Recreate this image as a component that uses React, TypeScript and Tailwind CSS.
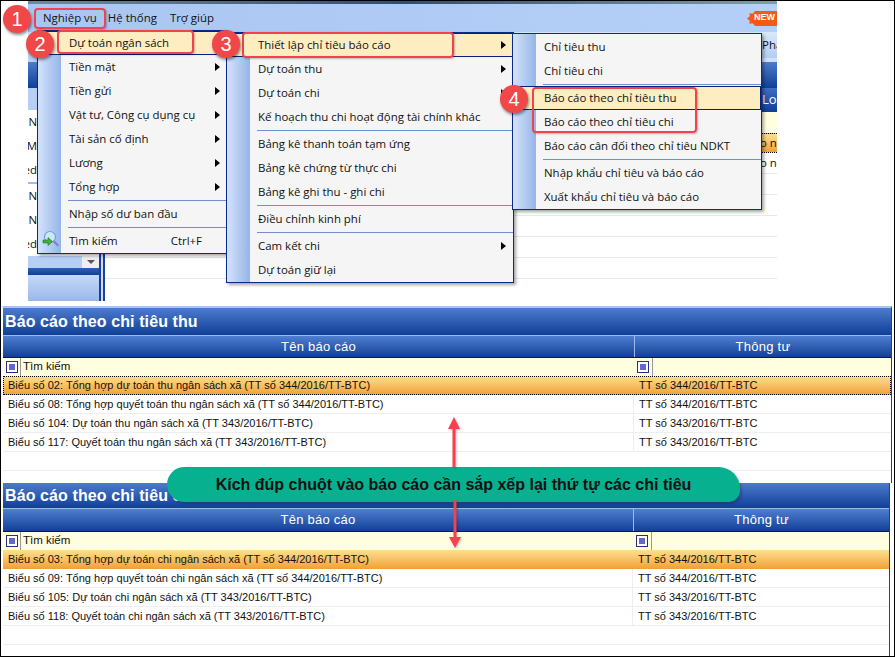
const menuFont = "font-['Open_Sans','Noto_Sans',sans-serif] text-[11.45px] text-[#111]"
const tableFont = "font-['Liberation_Sans',Arial,sans-serif] text-[11px] text-[#111]"

type Item = { label?: string; arrow?: boolean; sep?: boolean; active?: boolean; hint?: string; icon?: boolean }

const menu1: Item[] = [
  { label: 'Dự toán ngân sách', active: true },
  { label: 'Tiền mặt', arrow: true },
  { label: 'Tiền gửi', arrow: true },
  { label: 'Vật tư, Công cụ dụng cụ', arrow: true },
  { label: 'Tài sản cố định', arrow: true },
  { label: 'Lương', arrow: true },
  { label: 'Tổng hợp', arrow: true },
  { sep: true },
  { label: 'Nhập số dư ban đầu' },
  { sep: true },
  { label: 'Tìm kiếm', hint: 'Ctrl+F', icon: true },
]

const menu2: Item[] = [
  { label: 'Thiết lập chỉ tiêu báo cáo', arrow: true, active: true },
  { label: 'Dự toán thu', arrow: true },
  { label: 'Dự toán chi', arrow: true },
  { label: 'Kế hoạch thu chi hoạt động tài chính khác' },
  { sep: true },
  { label: 'Bảng kê thanh toán tạm ứng' },
  { label: 'Bảng kê chứng từ thực chi' },
  { label: 'Bảng kê ghi thu - ghi chi' },
  { sep: true },
  { label: 'Điều chỉnh kinh phí' },
  { sep: true },
  { label: 'Cam kết chi', arrow: true },
  { label: 'Dự toán giữ lại' },
]

const menu3: Item[] = [
  { label: 'Chỉ tiêu thu' },
  { label: 'Chỉ tiêu chi' },
  { sep: true },
  { label: 'Báo cáo theo chỉ tiêu thu', active: true },
  { label: 'Báo cáo theo chỉ tiêu chi' },
  { label: 'Báo cáo cân đối theo chỉ tiêu NDKT' },
  { sep: true },
  { label: 'Nhập khẩu chỉ tiêu và báo cáo' },
  { label: 'Xuất khẩu chỉ tiêu và báo cáo' },
]

function SearchIcon() {
  return (
    <svg className="absolute left-[4px] top-[1px] w-[17px] h-[17px]" viewBox="0 0 17 17">
      <circle cx="8" cy="7" r="5.5" fill="#cfe6fa" stroke="#6aa5d8" strokeWidth="1.2" />
      <path d="M12 11.5 L15.5 15" stroke="#8a7cc8" strokeWidth="2.2" strokeLinecap="round" />
      <path d="M1 10 H6 V7.5 L10.5 11.5 L6 15.5 V13 H1 Z" fill="#3fae3a" stroke="#1f7a1f" strokeWidth="0.6" />
    </svg>
  )
}

function MenuRows({ items }: { items: Item[] }) {
  return (
    <div className="flex flex-col">
      {items.map((item, i) =>
        item.sep ? (
          <div key={i} className="h-[3px] flex items-center pl-[30px]">
            <div className="h-px w-full bg-[#6f8fd0]" />
          </div>
        ) : (
          <div
            key={i}
            className={`h-6 flex items-center pl-[31px] pr-[7px] relative ${menuFont} ${
              item.active ? 'bg-[#fdedc0] outline outline-1 -outline-offset-1 outline-[#0a1f7a]' : ''
            }`}
          >
            {item.icon && <SearchIcon />}
            <span>{item.label}</span>
            {item.hint && <span className="ml-auto mr-[18px]">{item.hint}</span>}
            {item.arrow && <span className="ml-auto w-0 h-0 border-y-[4px] border-y-transparent border-l-[5px] border-l-black" />}
          </div>
        ),
      )}
    </div>
  )
}

function Menu({ items, className }: { items: Item[]; className: string }) {
  return (
    <div className={`absolute border border-[#0a2a8c] bg-[#f5f5f5] shadow-[2px_2px_3px_rgba(0,0,0,0.35)] ${className}`}>
      <div className="absolute left-0 top-0 bottom-0 w-[23px] bg-gradient-to-r from-[#d4e3fc] to-[#95b5e6]" />
      <div className="relative">
        <MenuRows items={items} />
      </div>
    </div>
  )
}

function Badge({ n, className }: { n: number; className: string }) {
  return (
    <div
      className={`absolute w-[28px] h-[28px] rounded-full bg-[#f04848] text-white flex items-center justify-center text-[20px] font-['Liberation_Sans',Arial,sans-serif] shadow-[1px_2px_3px_rgba(0,0,0,0.45)] ${className}`}
    >
      {n}
    </div>
  )
}

function Callout({ className }: { className: string }) {
  return <div className={`absolute border-[2px] border-[#f0434f] rounded-[4px] shadow-[1px_1px_2px_rgba(0,0,0,0.25)] ${className}`} />
}

function FilterBox() {
  return (
    <div className="w-[12px] h-[12px] border border-[#2b2f80] flex items-center justify-center bg-white shrink-0">
      <div className="w-[6px] h-[6px] bg-[#6666cc]" />
    </div>
  )
}

function ReportPanel({
  title,
  rows,
  col,
  dotted,
  className,
  titleClass,
  headerClass,
}: {
  title: string
  rows: [string, string][]
  col: number
  dotted?: boolean
  className: string
  titleClass: string
  headerClass: string
}) {
  return (
    <div className={`flex flex-col bg-white border-r border-[#1740a0] ${className}`}>
      <div className={`bg-gradient-to-b from-[#4d7bcc] to-[#0f3f98] flex items-center font-['Liberation_Sans',Arial,sans-serif] font-bold text-[16px] tracking-[0.1px] text-white ${titleClass}`}>
        {title}
      </div>
      <div className={`flex bg-gradient-to-b from-[#4f7fd0] to-[#123f98] border-t border-b border-t-[#9fb9e8] border-b-[#0a1a50] font-['Liberation_Sans',Arial,sans-serif] text-[13px] text-white ${headerClass}`}>
        <div className="flex items-center justify-center tracking-[0.25px]" style={{ width: col }}>Tên báo cáo</div>
        <div className="flex-1 flex items-center justify-center tracking-[0.25px] border-l border-[#9fb9e8]">Thông tư</div>
      </div>
      <div className="h-[18px] flex bg-[#ffffe0] items-center font-['Liberation_Sans',Arial,sans-serif] text-[11.5px] text-[#111]">
        <div className="flex items-center h-full" style={{ width: col }}>
          <div className="ml-[3px]"><FilterBox /></div>
          <div className="ml-[2px] h-full border-l border-[#999] pl-[2px] flex items-center">Tìm kiếm</div>
        </div>
        <div className="ml-[3px]"><FilterBox /></div>
        <div className="ml-[3px] h-full border-l border-[#999]" />
      </div>
      {rows.map(([name, doc], i) => (
        <div
          key={name}
          className={`h-[19px] flex items-center ${tableFont} ${
            i === 0
              ? `bg-gradient-to-b from-[#fde08e] to-[#f0a030] ${dotted ? 'outline-1 outline-dotted -outline-offset-1 outline-black' : ''}`
              : 'border-b border-[#eeeeee]'
          }`}
        >
          <div className={`pl-[5px] ${i === 0 ? '' : 'border-r border-[#eeeeee]'} h-full flex items-center`} style={{ width: col }}>{name}</div>
          <div className="pl-[5px]">{doc}</div>
        </div>
      ))}
      <div className="h-[19px] border-b border-[#eeeeee]" />
    </div>
  )
}

function LeftRow({ text }: { text: string }) {
  return <div className={`h-6 flex items-center justify-end pr-[62px] whitespace-nowrap ${menuFont}`}>{text}</div>
}

function RightLine() {
  return <div className="h-[21px] border-b border-[#e8e8e8]" />
}

function NewBadge() {
  return (
    <div className="relative w-[30px] h-[15px] flex items-center justify-end pr-[2px] font-['Liberation_Sans',Arial,sans-serif] font-bold text-[9px] text-white">
      <svg className="absolute left-0 top-0 w-[30px] h-[15px]" viewBox="0 0 30 15" fill="#f55a14">
        <path d="M0 7.5 L3 5 L2 2.5 L6 2.5 L8 0 L30 0 V15 L8 15 L6 12.5 L2 12.5 L3 10 Z" />
      </svg>
      <span className="relative">NEW</span>
    </div>
  )
}

export default function App() {
  return (
    <div className="relative w-[895px] h-[657px] bg-white overflow-hidden border border-black">
      {/* app window behind the menus */}
      <div className="ml-[27px] w-[749px] h-[305px] overflow-hidden">
        <div className="h-[3px] bg-gradient-to-r from-[#6f8a9e] via-[#2f4f6f] to-[#7f9fa8]" />
        <div className={`h-[28px] bg-gradient-to-r from-[#a9c6f2] to-[#b5d0f8] flex items-center pl-[15px] ${menuFont}`}>
          <span>Nghiệp vụ</span>
          <span className="ml-[11px]">Hệ thống</span>
          <span className="ml-[13px]">Trợ giúp</span>
          <div className="ml-auto"><NewBadge /></div>
        </div>
        <div className="h-[269px] flex">
          <div className="w-[73px] flex flex-col border-r-2 border-[#1740a0] bg-white overflow-hidden">
            <div className="h-[30px] bg-gradient-to-b from-[#cfe0fb] to-[#b7cff5]" />
            <div className="h-[26px] bg-gradient-to-b from-[#4d7bcc] to-[#0f3f98]" />
            <div className="h-[22px] bg-[#b7cff5]" />
            <LeftRow text="o N" />
            <LeftRow text="M" />
            <LeftRow text="ed" />
            <div className="h-[2px] bg-[#a0bde8]" />
            <LeftRow text="o N" />
            <LeftRow text="N" />
            <LeftRow text="ed" />
            <div className="h-[12px] flex bg-[#b7cff5]">
              <div className="flex-1" />
              <div className="w-[17px] bg-[#eeeeee] flex items-center justify-center">
                <div className="w-0 h-0 border-x-[4px] border-x-transparent border-t-[4px] border-t-[#555]" />
              </div>
            </div>
            <div className="h-[7px] bg-gradient-to-b from-[#2f5fb8] to-[#0f3f98]" />
            <div className="flex-1 bg-gradient-to-b from-[#c4d9fa] to-[#9ab8e8]" />
          </div>
          <div className="w-[2px] bg-[#d6dce8]" />
          <div className="flex-1 border-l-2 border-[#1740a0] overflow-hidden whitespace-nowrap">
            <div className={`h-[26px] bg-gradient-to-b from-[#dbe8fc] to-[#b3cdf5] flex items-center pl-[657px] ${menuFont}`}>Phân</div>
            <div className="h-[4px] bg-[#cfe0fb]" />
            <div className="h-[26px] bg-gradient-to-b from-[#4d7bcc] to-[#0f3f98]" />
            <div className="h-[24px] bg-gradient-to-b from-[#3f6dc4] to-[#0f3f98] flex items-center pl-[657px] font-['Open_Sans',sans-serif] text-[13px] text-white">Loại</div>
            <div className="h-[21px] bg-[#ffffe0]" />
            <div className={`h-[20px] bg-gradient-to-b from-[#fde08e] to-[#f0a030] border-y border-dotted border-black flex items-center pl-[655px] ${menuFont}`}>o nội</div>
            <div className={`h-[21px] border-b border-[#e8e8e8] flex items-center pl-[655px] ${menuFont}`}>o nội</div>
            <RightLine />
            <RightLine />
            <RightLine />
            <RightLine />
            <RightLine />
          </div>
        </div>
      </div>

      <ReportPanel
        title="Báo cáo theo chỉ tiêu thu"
        col={631}
        dotted
        className="ml-[1px] w-[890px] h-[177px] border-t-2 border-t-[#a8c4f0] border-l border-l-white"
        titleClass="h-[27px] pl-[2px]"
        headerClass="h-[23px]"
        rows={[
          ['Biểu số 02: Tổng hợp dự toán thu ngân sách xã (TT số 344/2016/TT-BTC)', 'TT số 344/2016/TT-BTC'],
          ['Biểu số 08: Tổng hợp quyết toán thu ngân sách xã (TT số 344/2016/TT-BTC)', 'TT số 344/2016/TT-BTC'],
          ['Biểu số 104: Dự toán thu ngân sách xã (TT 343/2016/TT-BTC)', 'TT số 343/2016/TT-BTC'],
          ['Biểu số 117: Quyết toán thu ngân sách xã (TT 343/2016/TT-BTC)', 'TT số 343/2016/TT-BTC'],
        ]}
      />
      <ReportPanel
        title="Báo cáo theo chỉ tiêu chi"
        col={630}
        className="ml-[2px] w-[887px] h-[173px]"
        titleClass="h-[25px] pl-[2px]"
        headerClass="h-[24px]"
        rows={[
          ['Biểu số 03: Tổng hợp dự toán chi ngân sách xã (TT số 344/2016/TT-BTC)', 'TT số 344/2016/TT-BTC'],
          ['Biểu số 09: Tổng hợp quyết toán chi ngân sách xã (TT số 344/2016/TT-BTC)', 'TT số 344/2016/TT-BTC'],
          ['Biểu số 105: Dự toán chi ngân sách xã (TT 343/2016/TT-BTC)', 'TT số 343/2016/TT-BTC'],
          ['Biểu số 118: Quyết toán chi ngân sách xã (TT 343/2016/TT-BTC)', 'TT số 343/2016/TT-BTC'],
        ]}
      />

      {/* open menus */}
      <Menu items={menu1} className="left-[36px] top-[29px] w-[191px]" />
      <Menu items={menu2} className="left-[225px] top-[31px] w-[288px]" />
      <Menu items={menu3} className="left-[511px] top-[32px] w-[250px] pt-px" />

      {/* annotations */}
      <Callout className="left-[33px] top-[7px] w-[72px] h-[21px]" />
      <Callout className="left-[56px] top-[29px] w-[137px] h-[24px]" />
      <Callout className="left-[241px] top-[31px] w-[212px] h-[26px]" />
      <Callout className="left-[531px] top-[86px] w-[165px] h-[46px]" />
      <Badge n={1} className="left-[2px] top-[4px]" />
      <Badge n={2} className="left-[25px] top-[29px]" />
      <Badge n={3} className="left-[211px] top-[29px]" />
      <Badge n={4} className="left-[499px] top-[84px]" />

      <div className="absolute left-[166px] top-[466px] w-[573px] h-[35px] bg-[#07b08f] rounded-tl-[18px] rounded-tr-[22px] rounded-bl-[18px] rounded-br-[12px] flex items-center justify-center font-['Liberation_Sans',Arial,sans-serif] font-bold text-[16px] text-[#111] shadow-[2px_2px_3px_rgba(0,0,0,0.2)]">
        Kích đúp chuột vào báo cáo cần sắp xếp lại thứ tự các chỉ tiêu
      </div>
      <svg className="absolute left-[445px] top-[414px] w-[18px] h-[136px] drop-shadow-[1px_1px_1px_rgba(0,0,0,0.25)]" viewBox="0 0 18 136" fill="#f4434f">
        <path d="M8 2 L14 14 H9.5 V52 H6.5 V14 H2 Z" />
        <path d="M7.5 85 H10.5 V122 H15 L9 133 L3 122 H7.5 Z" />
      </svg>
    </div>
  )
}
